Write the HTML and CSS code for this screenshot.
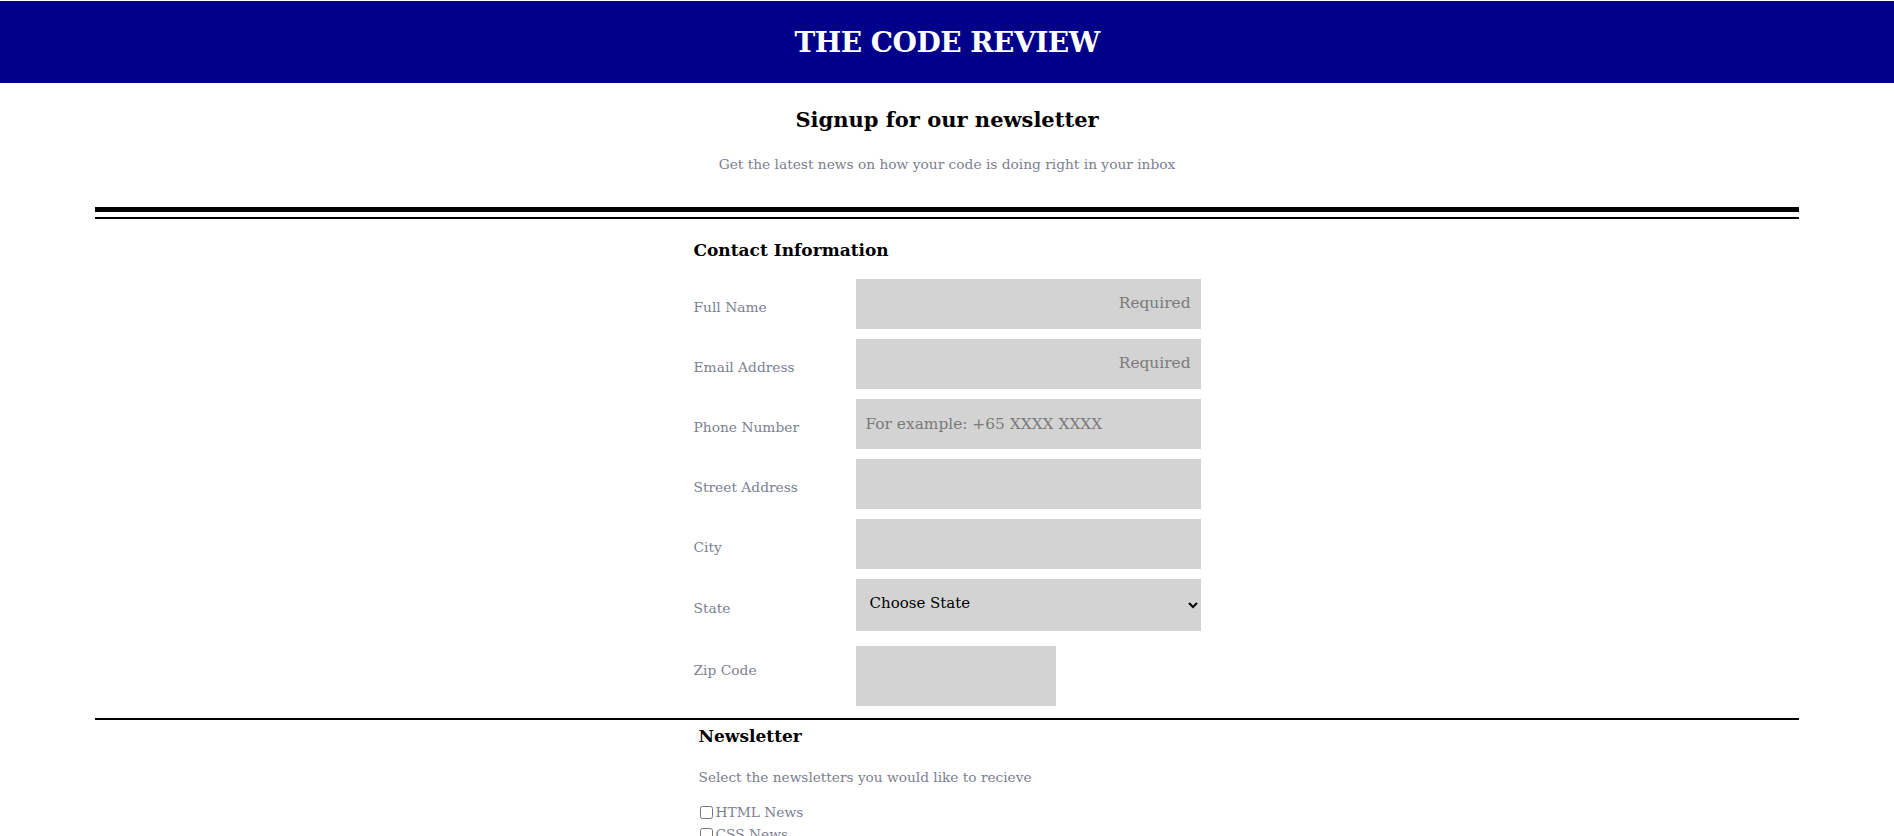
FILE: index.html
```html
<!DOCTYPE html>
<html lang="en">
<head>
<meta charset="utf-8">
<title>The Code Review</title>
<link rel="stylesheet" href="styles.css">
</head>
<body>
<header class="masthead">
  <h1 class="masthead-title">THE CODE REVIEW</h1>
</header>
<section class="intro">
  <h2 class="intro-title">Signup for our newsletter</h2>
  <p class="intro-text">Get the latest news on how your code is doing right in your inbox</p>
</section>
<div class="rule-double"><div class="rule-thick"></div><div class="rule-thin"></div></div>
<form class="signup">
  <fieldset class="contact">
    <h3 class="section-title">Contact Information</h3>
    <div class="contact-grid">
      <label class="field-label" for="name">Full Name</label>
      <input class="field-input field-right" id="name" type="text" placeholder="Required">
      <label class="field-label" for="email">Email Address</label>
      <input class="field-input field-right" id="email" type="email" placeholder="Required">
      <label class="field-label" for="phone">Phone Number</label>
      <input class="field-input" id="phone" type="tel" placeholder="For example: +65 XXXX XXXX">
      <label class="field-label" for="street">Street Address</label>
      <input class="field-input" id="street" type="text">
      <label class="field-label" for="city">City</label>
      <input class="field-input" id="city" type="text">
      <label class="field-label" for="state">State</label>
      <select class="field-select" id="state">
        <option>Choose State</option>
      </select>
      <label class="field-label field-label-top" for="zip">Zip Code</label>
      <input class="field-input field-zip" id="zip" type="text">
    </div>
  </fieldset>
  <div class="rule-single"></div>
  <fieldset class="newsletter">
    <h3 class="section-title">Newsletter</h3>
    <p class="newsletter-text">Select the newsletters you would like to recieve</p>
    <label class="check"><input type="checkbox" class="check-box">HTML News</label>
    <label class="check"><input type="checkbox" class="check-box">CSS News</label>
    <label class="check"><input type="checkbox" class="check-box">JavaScript News</label>
  </fieldset>
</form>
</body>
</html>
```
FILE: styles.css
```css
html, body {
  margin: 0;
  padding: 0;
  background: #ffffff;
}
body {
  padding-top: 1px;
  font-family: "DejaVu Serif", "Liberation Serif", serif;
  color: #000;
}
.masthead {
  background: #00008b;
  height: 82px;
  display: flex;
  align-items: center;
  justify-content: center;
}
.masthead-title {
  margin: 0;
  color: #fff;
  font-size: 28px;
  font-weight: bold;
  letter-spacing: -0.5px;
}
.intro {
  text-align: center;
  padding-top: 22px;
}
.intro-title {
  margin: 0;
  font-size: 21px;
  font-weight: bold;
  line-height: 30px;
}
.intro-text {
  margin: 19px 0 0;
  font-size: 13.75px;
  line-height: 20px;
  color: #7c8090;
}
.rule-double {
  margin: 33px 5% 0;
}
.rule-thick {
  height: 5px;
  background: #000;
}
.rule-thin {
  height: 2px;
  margin-top: 5px;
  background: #000;
}
.signup {
  margin: 0;
}
.contact, .newsletter {
  border: 0;
  margin: 0 auto;
  padding: 0;
  min-width: 0;
}
.contact {
  width: 507px;
}
.section-title {
  margin: 0;
  font-size: 17px;
  font-weight: bold;
  line-height: 24px;
}
.contact .section-title {
  margin-top: 19px;
}
.contact-grid {
  display: grid;
  grid-template-columns: 162px 345px;
  row-gap: 10px;
  margin-top: 17px;
  align-items: center;
}
.field-label {
  font-size: 13.8px;
  color: #7c8090;
  padding-top: 6px;
}
.field-label-top {
  align-self: start;
  padding-top: 21px;
}
.field-input {
  box-sizing: border-box;
  height: 50px;
  width: 345px;
  border: 0;
  background: #d3d3d3;
  padding: 0 10px;
  font-family: "DejaVu Serif", serif;
  font-size: 15.4px;
  outline: none;
}
.field-input::placeholder {
  color: #7a7a7a;
}
.field-right {
  text-align: right;
  padding-bottom: 2px;
}
.field-select {
  box-sizing: border-box;
  height: 52px;
  width: 345px;
  border: 0;
  background: #d3d3d3;
  padding: 0 6px 4px 10px;
  font-family: "DejaVu Serif", serif;
  font-size: 15px;
  color: #000;
}
.field-zip {
  width: 200px;
  height: 60px;
  margin-top: 5px;
}
.rule-single {
  height: 2px;
  background: #000;
  margin: 12px 5% 0;
}
.newsletter {
  width: 497px;
  padding-top: 4px;
}
.newsletter-text {
  margin: 20px 0 15px;
  font-size: 13.7px;
  color: #7c8090;
  line-height: 18px;
}
.check {
  display: flex;
  align-items: center;
  font-size: 13.75px;
  color: #7c8090;
  line-height: 22px;
}
.check-box {
  margin: 0 3px 0 1px;
  width: 13px;
  height: 13px;
}
```
